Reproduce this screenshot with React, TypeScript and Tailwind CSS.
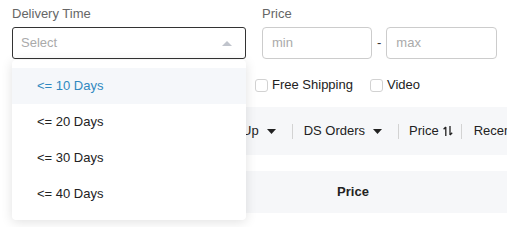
import React, { useState } from 'react';

const deliveryOptions = ['<= 10 Days', '<= 20 Days', '<= 30 Days', '<= 40 Days'];

const CaretDown = () => (
  <svg width="9" height="5" viewBox="0 0 9 5" className="ml-2 shrink-0">
    <path d="M0 0h9L4.5 5z" fill="#222" />
  </svg>
);

const SortIcon = () => (
  <svg width="10" height="10" viewBox="0 0 10 10" className="ml-1 shrink-0" fill="none" stroke="#222" strokeWidth="1.3">
    <path d="M2.8 1v9M2.8 1L0.6 3.3" />
    <path d="M7 0v9M7 9l2.2-2.3" />
  </svg>
);

const Divider = () => <span className="shrink-0 w-px h-[15px] bg-[#d3d3d3]" />;

const Checkbox = ({ label }: { label: string }) => (
  <label className="flex items-center gap-1">
    <span className="w-[13px] h-[13px] rounded-[3px] border border-[#d2d2d2] bg-white" />
    <span>{label}</span>
  </label>
);

const App = () => {
  const [hovered] = useState(0);

  return (
    <div
      className="w-[507px] h-[227px] overflow-hidden bg-white text-[13px] text-[#222]"
      style={{ fontFamily: '"Liberation Sans", Arial, sans-serif' }}
    >
      <div className="pt-1 pl-3">
        {/* filters */}
        <div className="flex gap-4 items-start">
          <div className="w-[234px] relative">
            <div className="h-5 leading-5 text-[#666] mb-[3px]">Delivery Time</div>
            <div className="h-8 rounded-[3px] border border-[#333] flex items-center justify-between pl-2 pr-[13px]">
              <span className="text-[#aaa]">Select</span>
              <svg width="10" height="5" viewBox="0 0 10 5">
                <path d="M0 5L5 0l5 5z" fill="#c0c4cc" />
              </svg>
            </div>

            {/* dropdown */}
            <div className="absolute left-0 top-[56px] w-full z-10 bg-white rounded-[4px] py-2 shadow-[0_2px_12px_0_rgba(0,0,0,0.12)]">
              {deliveryOptions.map((opt, i) => (
                <div
                  key={opt}
                  className={
                    i === hovered
                      ? 'h-9 flex items-center pl-[25px] bg-[#f5f7fa] text-[#3089c0]'
                      : 'h-9 flex items-center pl-[25px] text-[#222]'
                  }
                >
                  {opt}
                </div>
              ))}
            </div>
          </div>

          <div>
            <div className="h-5 leading-5 text-[#666] mb-[3px]">Price</div>
            <div className="flex items-center gap-[5px]">
              <div className="w-[110px] h-8 rounded-[4px] border border-[#ccc] flex items-center pl-[9px] text-[#aaa]">min</div>
              <span className="text-[#333]">-</span>
              <div className="w-[111px] h-8 rounded-[4px] border border-[#ccc] flex items-center pl-[9px] text-[#aaa]">max</div>
            </div>
          </div>
        </div>

        {/* checkboxes */}
        <div className="mt-4 h-5 flex items-center gap-[17px] pl-[243px]">
          <Checkbox label="Free Shipping" />
          <Checkbox label="Video" />
        </div>

        {/* sort bar */}
        <div className="mt-3 h-12 bg-[#f6f7f9] flex items-center whitespace-nowrap pl-[218px]">
          <div className="flex items-center pl-3 pr-4">
            <span>Up</span>
            <CaretDown />
          </div>
          <Divider />
          <div className="flex items-center pl-[11px] pr-4">
            <span>DS Orders</span>
            <CaretDown />
          </div>
          <Divider />
          <div className="flex items-center pl-[10px] pr-2">
            <span>Price</span>
            <SortIcon />
          </div>
          <Divider />
          <div className="flex items-center pl-3 pr-4">
            <span>Recently Added</span>
          </div>
        </div>

        {/* table header */}
        <div className="mt-4 h-[42px] bg-[#f6f7f9] flex items-center font-bold">
          <div className="w-[288px]" />
          <div className="w-[106px] text-center">Price</div>
        </div>
      </div>
    </div>
  );
};

export default App;
